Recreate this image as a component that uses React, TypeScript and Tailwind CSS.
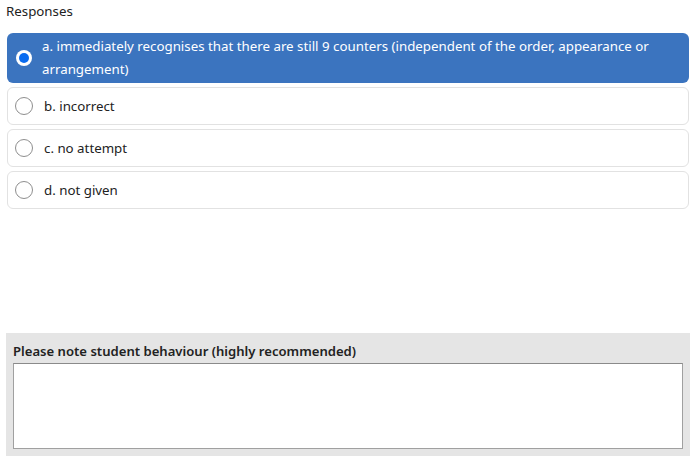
const options = [
  {
    key: "a",
    label:
      "a. immediately recognises that there are still 9 counters (independent of the order, appearance or arrangement)",
  },
  { key: "b", label: "b. incorrect" },
  { key: "c", label: "c. no attempt" },
  { key: "d", label: "d. not given" },
];

export default function App() {
  const selected = "a";

  return (
    <div
      className="w-[696px] h-[461px] bg-white text-[#222] text-[13.3px]"
      style={{ fontFamily: '"Noto Sans", "Open Sans", sans-serif' }}
    >
      <div className="px-[6px] pt-[2px] leading-[18px]">Responses</div>

      <div className="mt-[13px] ml-[7px] mr-[7px] flex flex-col gap-[4px]">
        {options.map((o) => {
          const isSel = o.key === selected;
          return isSel ? (
            <div
              key={o.key}
              className="flex items-center rounded-[6px] bg-[#3b74bf] text-white pl-[9px] pr-[12px] py-[2px]"
            >
              <span className="shrink-0 w-[16px] h-[16px] rounded-full bg-white flex items-center justify-center">
                <span className="w-[10px] h-[10px] rounded-full bg-[#0a6cf0]" />
              </span>
              <span className="ml-[10px] leading-[23px]">{o.label}</span>
            </div>
          ) : (
            <div
              key={o.key}
              className="flex items-center rounded-[6px] border border-[#e2e2e2] bg-white pl-[7px] pr-[12px] h-[38px]"
            >
              <span className="shrink-0 w-[18px] h-[18px] rounded-full border border-[#8e8e8e] bg-white" />
              <span className="ml-[11px] leading-[22px]">{o.label}</span>
            </div>
          );
        })}
      </div>

      <div className="mt-[124px] ml-[6px] mr-[6px] bg-[#e5e5e5] px-[7px] pt-[9px] pb-[7px]">
        <div className="font-semibold text-[13.1px] leading-[18px] mb-[3px]">
          Please note student behaviour (highly recommended)
        </div>
        <textarea className="block w-full h-[86px] bg-white border border-[#a0a0a0] border-t-[#8a8a8a] resize-none outline-none" />
      </div>
    </div>
  );
}
